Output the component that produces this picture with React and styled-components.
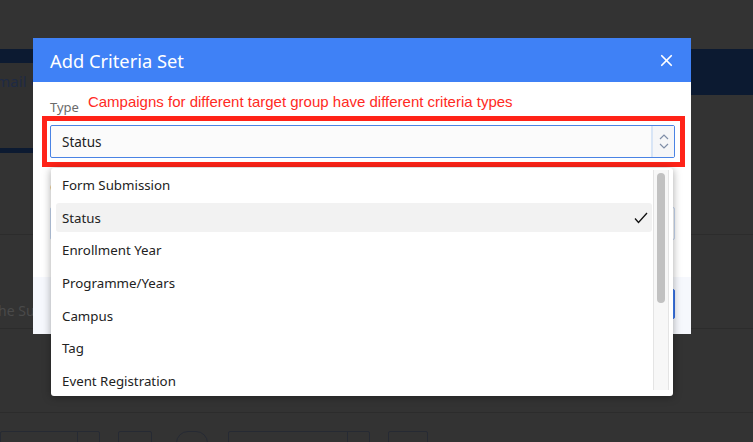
import React from 'react';
import styled, { createGlobalStyle } from 'styled-components';
import { X } from 'lucide-react';

const GlobalStyle = createGlobalStyle`
  html, body { margin: 0; padding: 0; background: #333333; }
  * { box-sizing: border-box; }
  body { font-family: "Noto Sans", "Open Sans", sans-serif; }
`;

const Screen = styled.div`
  position: relative;
  width: 753px;
  height: 442px;
  overflow: hidden;
  background: #333333;
`;

/* dimmed page behind the modal */
const Page = styled.div`
  display: flex;
  flex-direction: column;
  padding-top: 49px;
`;

const NavRow = styled.div`
  display: flex;
  height: 104px;
`;

const TabCol = styled.div`
  width: 220px;
  display: flex;
  flex-direction: column;
`;

const NavStrip = styled.div`
  height: ${p => p.h}px;
  background: #0c1a31;
  flex: ${p => (p.grow ? 1 : 'none')};
`;

const TabCard = styled.div`
  height: 85px;
  background: #303030;
  color: #1e2a44;
  font-size: 15px;
  padding: 8px 0 0 0;
  margin-left: -12px;
`;

const TabLine = styled.div`
  height: 5px;
  background: #0c1a31;
`;

const Rule = styled.div`
  height: 1px;
  background: #2c2c2c;
  margin-top: ${p => p.top}px;
`;

const PageText = styled.div`
  color: #4a4a4a;
  font-size: 14px;
  margin-top: ${p => p.top}px;
  margin-left: -7px;
`;

const FieldRow = styled.div`
  display: flex;
  gap: 18px;
  margin-top: 18px;
`;

const GhostBox = styled.div`
  width: ${p => p.w}px;
  height: 30px;
  border: 1px solid #262a33;
  border-radius: ${p => (p.pill ? 12 : 2)}px;
  margin-left: ${p => p.ml || 0}px;
  display: flex;
  justify-content: flex-end;
`;

const GhostAddon = styled.div`
  width: 22px;
  border-left: 1px solid #262a33;
`;

/* modal */
const Modal = styled.div`
  position: absolute;
  left: 33px;
  top: 38px;
  width: 658px;
  height: 296px;
  background: #ffffff;
  display: flex;
  flex-direction: column;
`;

const Header = styled.div`
  height: 44px;
  background: #3f81f6;
  display: flex;
  align-items: center;
  justify-content: space-between;
  padding: 0 17px 0 17px;
  color: #ffffff;
`;

const Title = styled.div`
  font-size: 18.3px;
  font-weight: 400;
`;

const CloseBtn = styled.div`
  display: flex;
  align-items: center;
  margin-right: -2px;
`;

const Body = styled.div`
  flex: 1;
  padding: 12px 16px 0 17px;
`;

const LabelRow = styled.div`
  display: flex;
  align-items: flex-start;
  gap: 9px;
  height: 22px;
`;

const Label = styled.div`
  margin-top: 5px;
  font-size: 13px;
  line-height: 17px;
  color: #6b6b6b;
`;

const Note = styled.div`
  font-family: "Liberation Sans", Arial, sans-serif;
  font-size: 15px;
  line-height: 16px;
  color: #ff2a24;
`;

const RedFrame = styled.div`
  margin: 0 -10px 0 -8px;
  padding: 4px 5px 4px 3px;
  border: 5px solid #ff2318;
`;

const Select = styled.div`
  height: 33px;
  border: 1px solid #4a83e4;
  border-radius: 2px;
  background: #fbfbfb;
  display: flex;
  align-items: stretch;
`;

const SelectValue = styled.div`
  flex: 1;
  display: flex;
  align-items: center;
  padding-left: 11px;
  font-size: 13.5px;
  color: #222222;
`;

const Spinner = styled.div`
  width: 23px;
  border-left: 2px solid #d8e5f6;
  background: #f5f6f8;
  display: flex;
  flex-direction: column;
  align-items: center;
  justify-content: center;
  gap: 3px;
`;

const SecondLabel = styled.div`
  margin-top: 12px;
  font-size: 13px;
  color: #6b6b6b;
  line-height: 17px;
`;

const Input = styled.div`
  margin-top: 11px;
  height: 33px;
  border: 1px solid #c7d8f2;
  border-radius: 2px;
`;

const Footer = styled.div`
  height: 57px;
  background: #f6f8fd;
  display: flex;
  justify-content: flex-end;
  align-items: center;
  padding: 0 16px 4px 0;
`;

const Button = styled.div`
  width: 80px;
  height: 30px;
  border: 1px solid #3b70e2;
  background: #3f81f6;
  border-radius: 2px;
`;

/* open dropdown */
const Menu = styled.div`
  position: absolute;
  left: 18px;
  top: 130px;
  width: 622px;
  height: 228px;
  background: #ffffff;
  border-radius: 3px;
  box-shadow: 0 1px 8px rgba(0, 0, 0, 0.35);
  display: flex;
  padding: 0 4px 0 5px;
`;

const List = styled.div`
  flex: 1;
  padding-top: 0.5px;
`;

const Item = styled.div`
  height: 32.7px;
  padding: 1.4px 0;
`;

const Option = styled.div`
  height: 100%;
  display: flex;
  align-items: center;
  justify-content: space-between;
  padding: 0 4px 0 6px;
  border-radius: 3px;
  background: ${p => (p.selected ? '#f2f2f2' : 'transparent')};
  font-size: 13.3px;
  color: #222222;
`;

const Track = styled.div`
  width: 16px;
  margin: 2px 0 6px 1px;
  background: #f7f7f7;
  border-left: 1px solid #e4e4e4;
  border-right: 1px solid #e4e4e4;
  padding: 3px 3px 0 3px;
`;

const Thumb = styled.div`
  height: 130px;
  background: #c1c1c1;
  border-radius: 4px;
`;

const options = [
  'Form Submission',
  'Status',
  'Enrollment Year',
  'Programme/Years',
  'Campus',
  'Tag',
  'Event Registration',
];

const Chevron = ({ up }) => (
  <svg width="10" height="6" viewBox="0 0 10 6">
    <polyline
      points={up ? '1,5 5,1 9,5' : '1,1 5,5 9,1'}
      fill="none"
      stroke="#7f8ea8"
      strokeWidth="1.2"
    />
  </svg>
);

const Check = () => (
  <svg width="14" height="12" viewBox="0 0 14 12">
    <polyline points="1,6.5 4.5,10.5 13,1" fill="none" stroke="#111" strokeWidth="1.3" />
  </svg>
);

export default function App() {
  return (
    <Screen>
      <GlobalStyle />
      <Page>
        <NavRow>
          <TabCol>
            <NavStrip h={14} />
            <TabCard>Email Campaign</TabCard>
            <TabLine />
          </TabCol>
          <NavStrip h={46} grow />
        </NavRow>
        <Rule top={81} />
        <PageText top={66}>the Subject</PageText>
        <Rule top={8} />
        <Rule top={83} />
        <FieldRow>
          <GhostBox w={100}>
            <GhostAddon />
          </GhostBox>
          <GhostBox w={34} />
          <GhostBox w={32} pill ml={6} />
          <GhostBox w={142} ml={2}>
            <GhostAddon />
          </GhostBox>
          <GhostBox w={40} />
        </FieldRow>
      </Page>

      <Modal>
        <Header>
          <Title>Add Criteria Set</Title>
          <CloseBtn>
            <X size={19} strokeWidth={2.2} color="#ffffff" />
          </CloseBtn>
        </Header>
        <Body>
          <LabelRow>
            <Label>Type</Label>
            <Note>Campaigns for different target group have different criteria types</Note>
          </LabelRow>
          <RedFrame>
            <Select>
              <SelectValue>Status</SelectValue>
              <Spinner>
                <Chevron up />
                <Chevron />
              </Spinner>
            </Select>
          </RedFrame>
          <SecondLabel>Criteria</SecondLabel>
          <Input />
        </Body>
        <Footer>
          <Button />
        </Footer>

        <Menu>
          <List>
            {options.map(o => (
              <Item key={o}>
                <Option selected={o === 'Status'}>
                  <span>{o}</span>
                  {o === 'Status' && <Check />}
                </Option>
              </Item>
            ))}
          </List>
          <Track>
            <Thumb />
          </Track>
        </Menu>
      </Modal>
    </Screen>
  );
}
